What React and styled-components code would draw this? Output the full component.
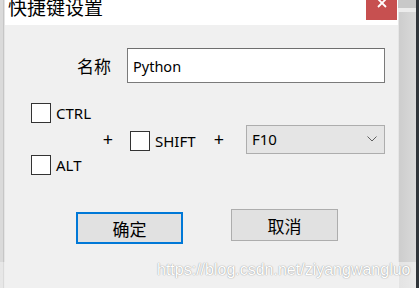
import React from 'react';
import styled, { createGlobalStyle } from 'styled-components';

const Global = createGlobalStyle`
  html, body { margin: 0; padding: 0; }
  body { width: 419px; height: 288px; overflow: hidden; background: #d9d9d9; }
`;

const CJK = `"Noto Sans CJK SC", "Noto Sans", sans-serif`;
const LATIN = `"Noto Sans", "Noto Sans CJK SC", sans-serif`;

const Desktop = styled.div`
  position: relative;
  display: flex;
  width: 419px;
  height: 288px;
  overflow: hidden;
`;

const LeftEdge = styled.div`
  flex: none;
  width: 5px;
  background:
    linear-gradient(to bottom, transparent 0 262px, rgba(255,255,255,0.35) 262px),
    linear-gradient(to right, #dadada 0 3px, #c6c6c6 3px 4px, #e4e4e4 4px 5px);
`;

const RightShadow = styled.div`
  flex: none;
  width: 18px;
  background:
    linear-gradient(to bottom, #c8c8c8 0 8px, #ececec 8px 12px, transparent 12px 262px, rgba(255,255,255,0.45) 262px),
    linear-gradient(to right, #e6e6e6 0 1px, #cdcdcd 1px, #dadada 100%);
`;

const DarkStrip = styled.div`
  flex: none;
  width: 3px;
  background: #30353a;
`;

const Window = styled.div`
  flex: none;
  width: 393px;
  display: flex;
  flex-direction: column;
  background: #f0f0f0;
`;

const TitleBar = styled.div`
  height: 25px;
  flex: none;
  background: #ffffff;
  display: flex;
  justify-content: space-between;
  align-items: flex-start;
  overflow: hidden;
`;

const Title = styled.div`
  font-family: ${CJK};
  font-size: 19px;
  line-height: 19px;
  margin-top: -3px;
  padding-left: 3px;
  color: #000;
`;

const CloseButton = styled.div`
  width: 31px;
  height: 20px;
  margin-right: 1px;
  background: #c75050;
  display: flex;
  justify-content: center;
  align-items: flex-start;
`;

const Body = styled.div`
  flex: 1;
  display: flex;
  flex-direction: column;
  padding-top: 23px;
`;

const NameRow = styled.div`
  display: flex;
  align-items: center;
  padding-left: 72px;
`;

const Label = styled.span`
  font-family: ${CJK};
  font-size: 17px;
  color: #000;
  width: 50px;
  line-height: 20px;
`;

const TextInput = styled.div`
  box-sizing: border-box;
  width: 258px;
  height: 35px;
  background: #fff;
  border: 1px solid #7a7a7a;
  border-top-color: #6e6e6e;
  display: flex;
  align-items: center;
  padding-left: 5px;
  font-family: ${LATIN};
  font-size: 14.5px;
  color: #000;
`;

const ModRow = styled.div`
  display: flex;
  align-items: center;
  padding-left: 26px;
  margin-top: 20px;
`;

const ModColumn = styled.div`
  width: 70px;
  height: 72px;
  display: flex;
  flex-direction: column;
  justify-content: space-between;
`;

const Check = styled.label`
  display: flex;
  align-items: center;
  gap: 5px;
  width: ${p => p.$w || 'auto'};
  margin-left: ${p => p.$ml || 0}px;
  margin-top: ${p => p.$mt || 0}px;
  font-family: ${LATIN};
  font-size: 15px;
  color: #000;
  line-height: 20px;
`;

const Box = styled.span`
  box-sizing: border-box;
  flex: none;
  width: 20px;
  height: 20px;
  border: 1px solid #333;
  background: #fff;
`;

const Plus = styled.span`
  width: ${p => p.$w}px;
  text-align: center;
  font-family: ${LATIN};
  font-size: 18px;
  line-height: 20px;
  color: #000;
`;

const Select = styled.div`
  box-sizing: border-box;
  width: 139px;
  height: 29px;
  margin-left: 13px;
  background: #e5e5e5;
  border: 1px solid #adadad;
  display: flex;
  align-items: center;
  justify-content: space-between;
  padding: 0 7px 0 5px;
  font-family: ${LATIN};
  font-size: 15px;
  color: #000;
`;

const ButtonRow = styled.div`
  display: flex;
  align-items: flex-start;
  padding-left: 71px;
  margin-top: 34px;
  gap: 48px;
`;

const Button = styled.div`
  box-sizing: border-box;
  width: 107px;
  height: 32px;
  margin-top: ${p => (p.$default ? 3 : 0)}px;
  background: #e1e1e1;
  border: ${p => (p.$default ? '2px solid #0078d7' : '1px solid #adadad')};
  display: flex;
  align-items: center;
  justify-content: center;
  font-family: ${CJK};
  font-size: 17px;
  color: #000;
`;

const Watermark = styled.div`
  position: absolute;
  left: 157px;
  top: 260px;
  font-family: "Liberation Sans", Arial, sans-serif;
  font-size: 16px;
  line-height: 19px;
  color: #ffffff;
  text-shadow: 0 0 1px rgba(0, 0, 0, 0.4), 0 0 2px rgba(0, 0, 0, 0.15);
  white-space: nowrap;
`;

export default function App() {
  return (
    <>
      <Global />
      <Desktop>
        <LeftEdge />
        <Window>
          <TitleBar>
            <Title>快捷键设置</Title>
            <CloseButton>
              <svg width="10" height="9" viewBox="0 0 10 9">
                <path d="M1 -1 L9 7 M9 -1 L1 7" stroke="#fff" strokeWidth="1.8" fill="none" />
              </svg>
            </CloseButton>
          </TitleBar>
          <Body>
            <NameRow>
              <Label>名称</Label>
              <TextInput>Python</TextInput>
            </NameRow>
            <ModRow>
              <ModColumn>
                <Check><Box />CTRL</Check>
                <Check><Box />ALT</Check>
              </ModColumn>
              <Plus $w={14}>+</Plus>
              <Check $w="75px" $ml={15} $mt={4}><Box />SHIFT</Check>
              <Plus $w={28}>+</Plus>
              <Select>
                <span>F10</span>
                <svg width="10" height="6" viewBox="0 0 10 6">
                  <path d="M0.5 0.5 L5 5 L9.5 0.5" stroke="#606060" strokeWidth="1" fill="none" />
                </svg>
              </Select>
            </ModRow>
            <ButtonRow>
              <Button $default>确定</Button>
              <Button>取消</Button>
            </ButtonRow>
          </Body>
        </Window>
        <RightShadow />
        <DarkStrip />
        <Watermark>https://blog.csdn.net/ziyangwangluo</Watermark>
      </Desktop>
    </>
  );
}
